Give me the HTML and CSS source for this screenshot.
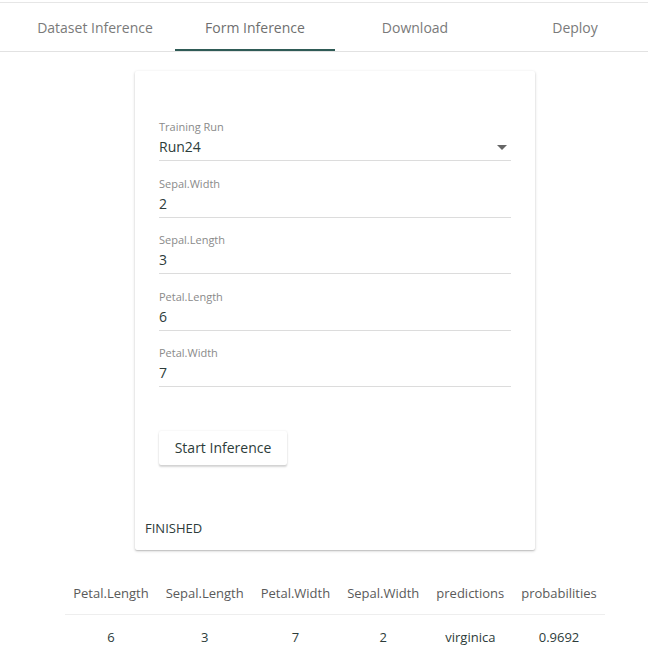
FILE: index.html
```html
<!DOCTYPE html>
<html>
<head>
<meta charset="utf-8">
<link rel="stylesheet" href="styles.css">
</head>
<body>
<div class="page">
  <nav class="tabs">
    <div class="tab">Dataset Inference</div>
    <div class="tab active">Form Inference</div>
    <div class="tab">Download</div>
    <div class="tab">Deploy</div>
  </nav>
  <div class="card">
    <div class="form">
      <div class="field">
        <div class="label">Training Run</div>
        <div class="value select">Run24<svg class="arrow" width="10" height="5" viewBox="0 0 10 5"><path d="M0 0h10L5 5z" fill="#666"/></svg></div>
      </div>
      <div class="field">
        <div class="label">Sepal.Width</div>
        <div class="value">2</div>
      </div>
      <div class="field">
        <div class="label">Sepal.Length</div>
        <div class="value">3</div>
      </div>
      <div class="field">
        <div class="label">Petal.Length</div>
        <div class="value">6</div>
      </div>
      <div class="field">
        <div class="label">Petal.Width</div>
        <div class="value">7</div>
      </div>
      <button class="btn">Start Inference</button>
    </div>
    <div class="status">FINISHED</div>
  </div>
  <table class="results">
    <thead>
      <tr><th>Petal.Length</th><th>Sepal.Length</th><th>Petal.Width</th><th>Sepal.Width</th><th>predictions</th><th>probabilities</th></tr>
    </thead>
    <tbody>
      <tr><td>6</td><td>3</td><td>7</td><td>2</td><td>virginica</td><td>0.9692</td></tr>
    </tbody>
  </table>
</div>
</body>
</html>
```
FILE: styles.css
```css
html, body {
  margin: 0;
  padding: 0;
  background: #fff;
  overflow: hidden;
}
body {
  font-family: "Open Sans", "Liberation Sans", sans-serif;
  color: #2d3c3a;
}
.page {
  width: 670px;
  padding-top: 2px;
  display: flex;
  flex-direction: column;
  align-items: center;
}
.tabs {
  width: 670px;
  display: flex;
  justify-content: center;
  border-top: 1px solid #e6e6e6;
  border-bottom: 1px solid #e2e2e2;
  height: 48px;
}
.tab {
  width: 160px;
  height: 48px;
  box-sizing: border-box;
  display: flex;
  align-items: center;
  justify-content: center;
  font-size: 14px;
  color: #7a7a7a;
  border-bottom: 2px solid transparent;
  padding-top: 2px;
}
.tab.active {
  border-bottom-color: #2f5b56;
  color: #6f6f6f;
}
.card {
  margin-top: 19px;
  width: 400px;
  height: 479px;
  box-sizing: border-box;
  background: #fff;
  border-radius: 2px;
  box-shadow: 0 1px 3px rgba(0,0,0,0.22), 0 1px 1px rgba(0,0,0,0.10);
  display: flex;
  flex-direction: column;
}
.form {
  padding: 49px 24px 0 24px;
  display: flex;
  flex-direction: column;
  align-items: flex-start;
}
.field {
  width: 100%;
  margin-bottom: 15.5px;
}
.label {
  font-size: 11px;
  line-height: 14px;
  color: #8a8a8a;
}
.value {
  margin-top: 3px;
  font-size: 14px;
  line-height: 20px;
  padding-bottom: 3px;
  border-bottom: 1px solid #dcdcdc;
  color: #2d3c3a;
}
.select {
  display: flex;
  align-items: center;
  justify-content: space-between;
}
.arrow {
  margin-right: 4px;
}
.btn {
  margin-top: 28px;
  width: 128px;
  height: 34px;
  border: none;
  background: #fff;
  border-radius: 2px;
  font-family: "Open Sans", "Liberation Sans", sans-serif;
  font-size: 14px;
  color: #2d3c3a;
  box-shadow: 0 2px 2px rgba(0,0,0,0.16), 0 0 2px rgba(0,0,0,0.10);
  padding: 0;
}
.status {
  margin-top: auto;
  padding: 0 10px 14px 10px;
  font-size: 13px;
  line-height: 16px;
  color: #2d3c3a;
}
.results {
  margin-top: 22px;
  border-collapse: collapse;
  font-size: 13px;
}
.results th {
  font-weight: normal;
  color: #5a5a5a;
  padding: 0 8.5px;
  height: 42px;
  border-bottom: 1px solid #eeeeee;
  vertical-align: middle;
}
.results td {
  text-align: center;
  padding: 0 8.5px;
  height: 44px;
  color: #2d3c3a;
}
```
